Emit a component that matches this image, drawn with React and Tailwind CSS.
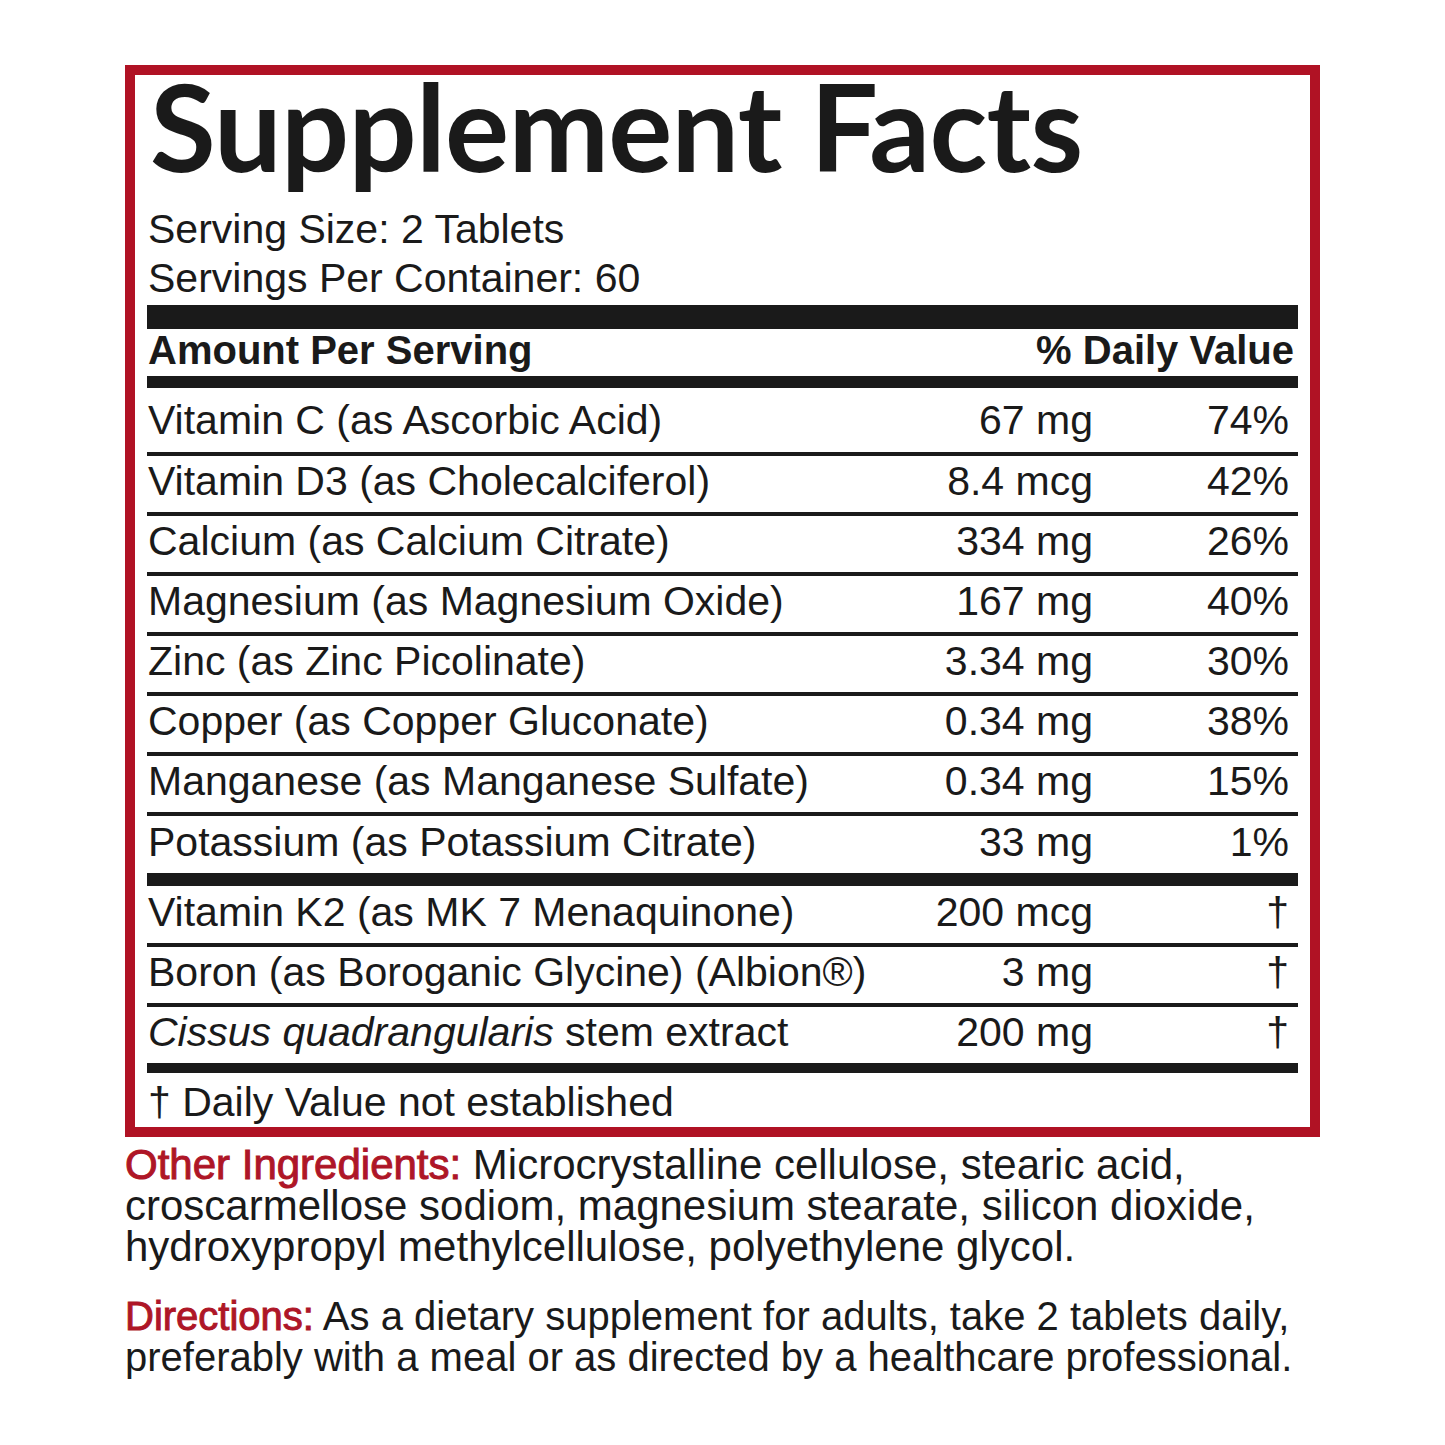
import React from "react";

const RED = "border-[#b01224]";

const rows = [
  { name: "Vitamin C (as Ascorbic Acid)", amount: "67 mg", dv: "74%" },
  { name: "Vitamin D3 (as Cholecalciferol)", amount: "8.4 mcg", dv: "42%" },
  { name: "Calcium (as Calcium Citrate)", amount: "334 mg", dv: "26%" },
  { name: "Magnesium (as Magnesium Oxide)", amount: "167 mg", dv: "40%" },
  { name: "Zinc (as Zinc Picolinate)", amount: "3.34 mg", dv: "30%" },
  { name: "Copper (as Copper Gluconate)", amount: "0.34 mg", dv: "38%" },
  { name: "Manganese (as Manganese Sulfate)", amount: "0.34 mg", dv: "15%" },
  { name: "Potassium (as Potassium Citrate)", amount: "33 mg", dv: "1%" },
];

const extras = [
  { name: "Vitamin K2 (as MK 7 Menaquinone)", amount: "200 mcg" },
  { name: "Boron (as Boroganic Glycine) (Albion®)", amount: "3 mg" },
  {
    name: (
      <>
        <i>Cissus quadrangularis</i> stem extract
      </>
    ),
    amount: "200 mg",
  },
];

const Row = ({ name, amount, dv, className }) => (
  <div className={`flex items-center text-[41px] leading-none whitespace-nowrap ${className}`}>
    <div className="flex-1 pl-px">{name}</div>
    <div className="text-right">{amount}</div>
    <div className="w-[205px] pr-[9px] text-right">{dv}</div>
  </div>
);

export default function App() {
  return (
    <div className="w-[1445px] h-[1445px] bg-white text-[#1a1a1a] font-['Liberation_Sans',Arial,sans-serif]">
      <div className="pl-[125px] pt-[65px] w-[1320px]">
        <div className={`border-[10px] ${RED} px-[12px]`}>
          {/* Title */}
          <h1 className="h-[100px] text-[120px] leading-[100px] font-bold tracking-[-0.7px] pl-[3px] font-['Lato','Open_Sans',sans-serif] mt-px">
            Supplement Facts
          </h1>

          {/* Serving info */}
          <div className="mt-[29px] text-[41px] leading-[49px] pl-px">
            <div>Serving Size: 2 Tablets</div>
            <div>Servings Per Container: 60</div>
          </div>

          <div className="mt-[2px] h-[24px] bg-[#1a1a1a]" />

          {/* Header */}
          <div className="h-[47px] pb-[6px] flex items-center justify-between text-[40px] leading-none font-bold">
            <div className="pl-px">Amount Per Serving</div>
            <div className="pr-[4px]">% Daily Value</div>
          </div>

          <div className="h-[12px] bg-[#1a1a1a]" />

          {rows.map((r, i) => (
            <Row
              key={r.name}
              {...r}
              className={
                i === 0
                  ? "h-[68px] border-b-[4px] border-[#1a1a1a]"
                  : i === rows.length - 1
                  ? "h-[57px] pb-[5px]"
                  : "h-[60px] pb-[5px] border-b-[4px] border-[#1a1a1a]"
              }
            />
          ))}

          <div className="h-[13px] bg-[#1a1a1a]" />

          {extras.map((r, i) => (
            <Row
              key={i}
              name={r.name}
              amount={r.amount}
              dv="†"
              className={
                i === 0
                  ? "h-[61px] pb-[5px] border-b-[4px] border-[#1a1a1a]"
                  : i === 1
                  ? "h-[60px] pb-[5px] border-b-[4px] border-[#1a1a1a]"
                  : "h-[56px] pb-[5px]"
              }
            />
          ))}

          <div className="h-[10px] bg-[#1a1a1a]" />

          <div className="h-[54px] flex items-center text-[41px] leading-none pl-px pt-[4px]">
            † Daily Value not established
          </div>
        </div>

        {/* Other ingredients / directions */}
        <p className="mt-[7px] text-[42px] leading-[41px]">
          <span className="text-[#ae1627] [-webkit-text-stroke:1px_#ae1627]">Other Ingredients:</span>{" "}
          Microcrystalline cellulose, stearic acid, croscarmellose sodiom, magnesium stearate, silicon dioxide,
          hydroxypropyl methylcellulose, polyethylene glycol.
        </p>
        <p className="mt-[29px] text-[40px] leading-[41px]">
          <span className="text-[#ae1627] [-webkit-text-stroke:1px_#ae1627]">Directions:</span> As a dietary
          supplement for adults, take 2 tablets daily, preferably with a meal or as directed by a healthcare
          professional.
        </p>
      </div>
    </div>
  );
}
